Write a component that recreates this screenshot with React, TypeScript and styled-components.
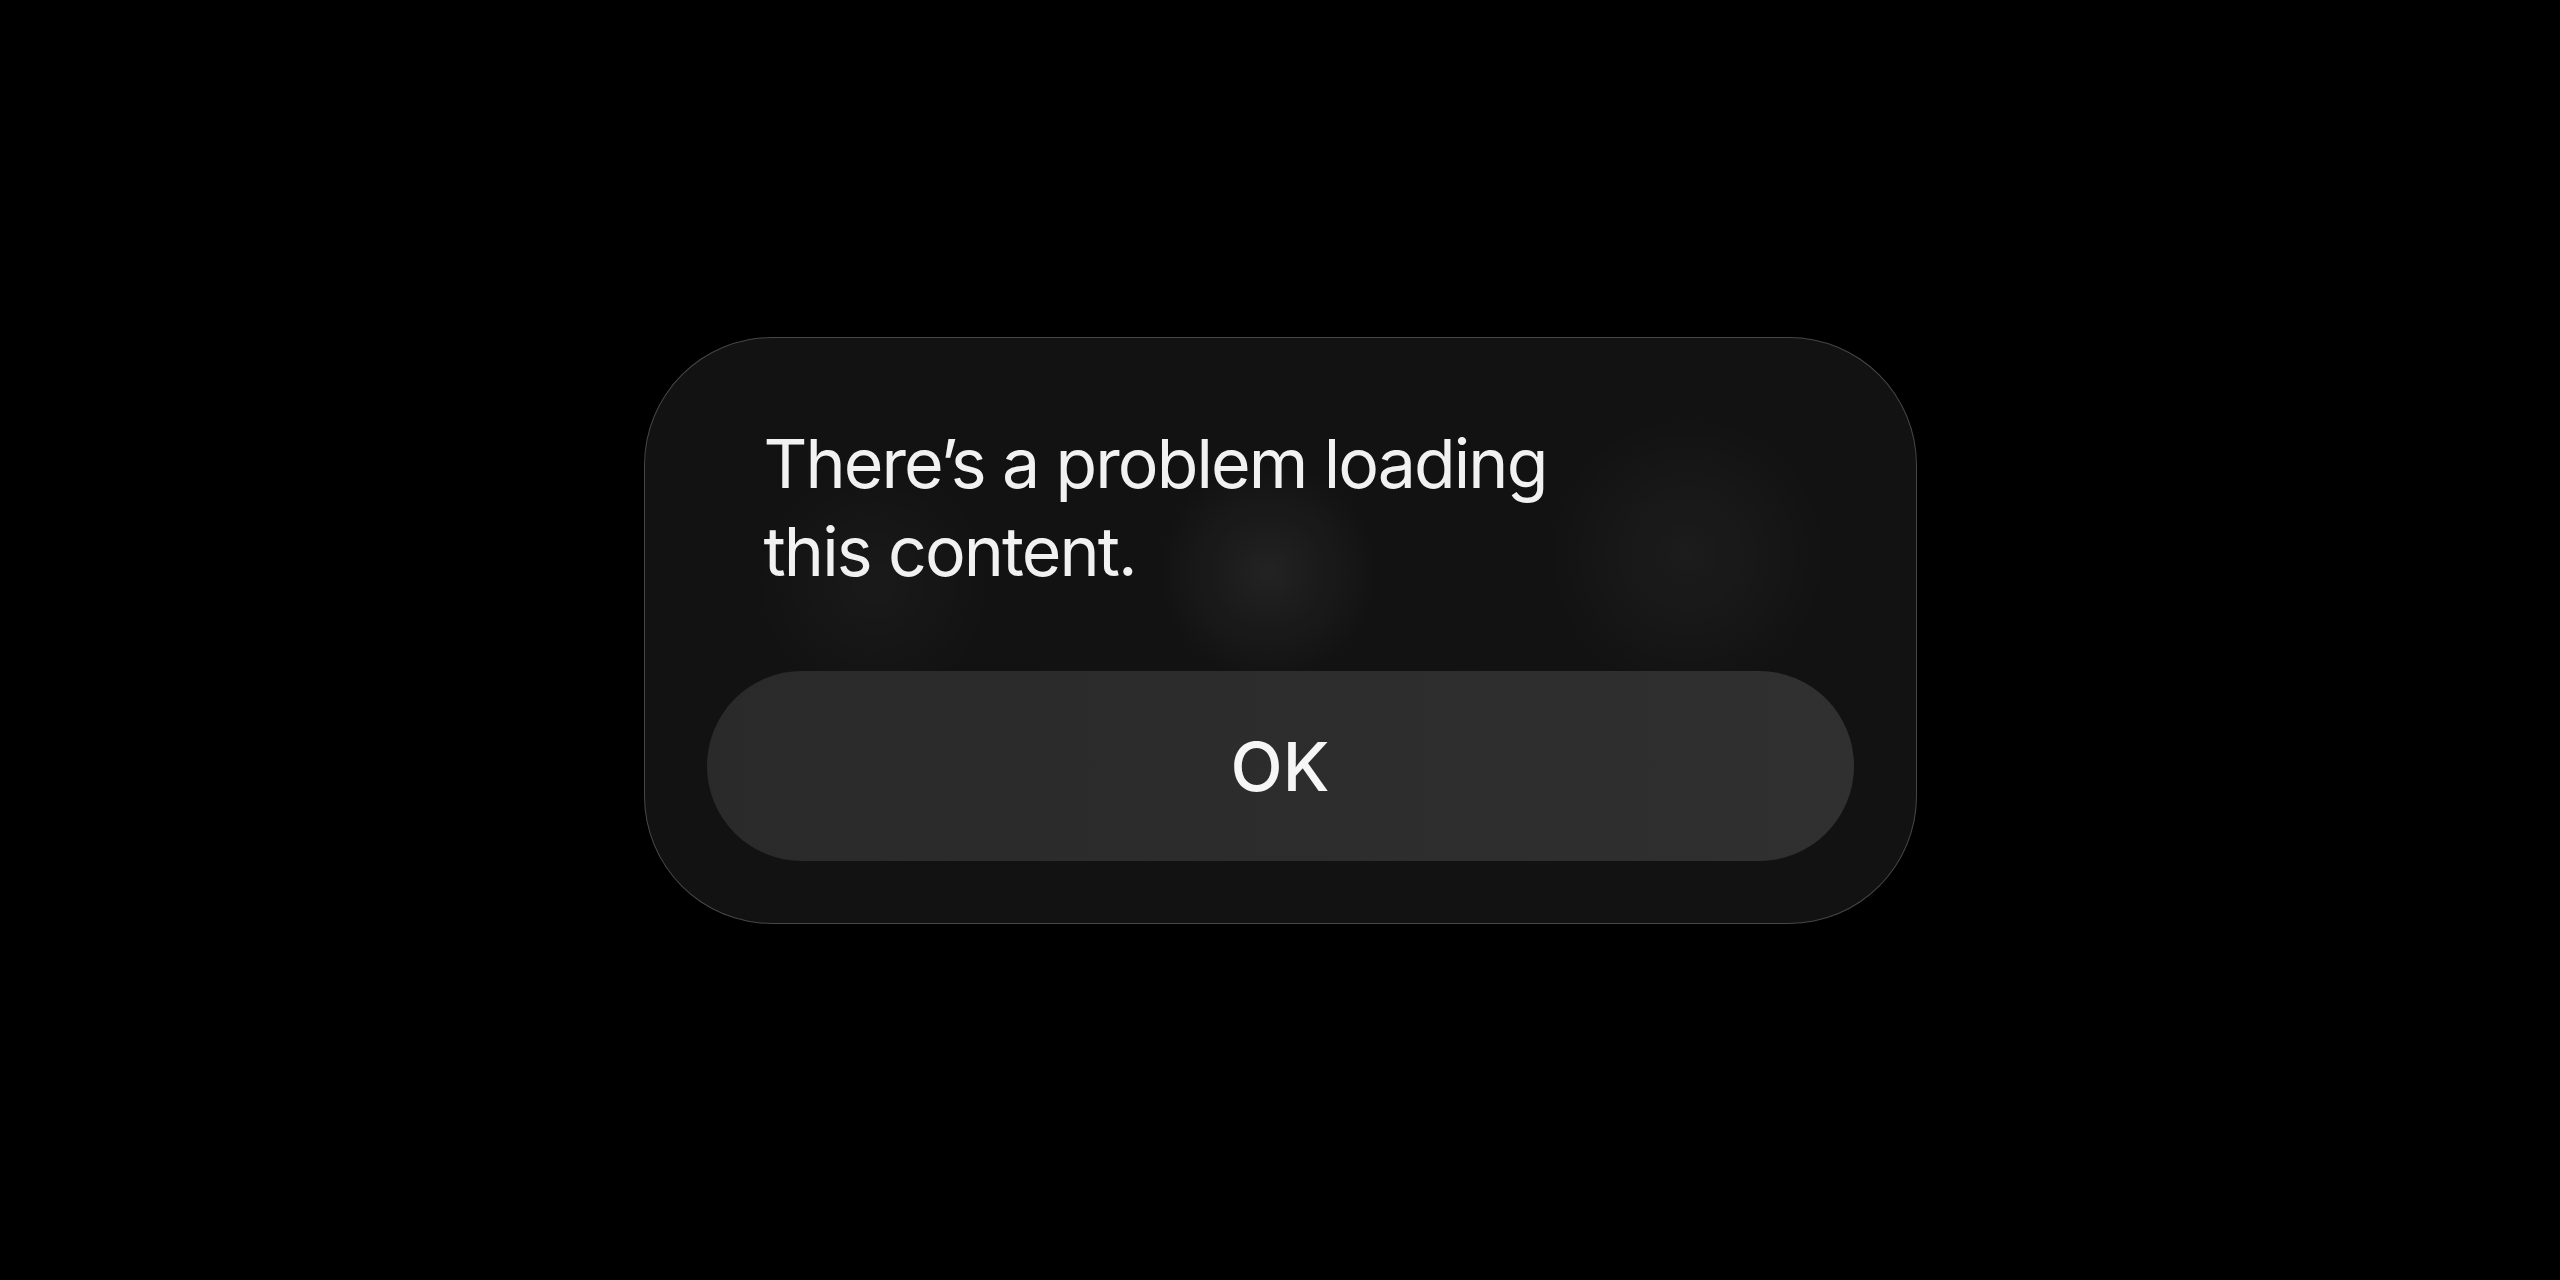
import React from 'react';
import styled, { createGlobalStyle } from 'styled-components';

const GlobalStyle = createGlobalStyle`
  html, body {
    margin: 0;
    padding: 0;
    background: #000;
  }
  body {
    font-family: Inter, "Noto Sans", "Liberation Sans", sans-serif;
    -webkit-font-smoothing: antialiased;
  }
`;

const Page = styled.div`
  width: 2560px;
  height: 1280px;
  display: flex;
  align-items: center;
  justify-content: center;
  padding-bottom: 20px;
  box-sizing: border-box;
  background: #000;
`;

const Dialog = styled.div`
  width: 1273px;
  height: 587px;
  box-sizing: border-box;
  padding: 62px;
  display: flex;
  flex-direction: column;
  border-radius: 128px;
  border: 1.5px solid rgba(255, 255, 255, 0.22);
  background:
    radial-gradient(circle at 49% 40%, rgba(255, 255, 255, 0.07) 0, rgba(255, 255, 255, 0) 110px),
    radial-gradient(circle at 82% 37%, rgba(255, 255, 255, 0.045) 0, rgba(255, 255, 255, 0) 140px),
    radial-gradient(circle at 18% 42%, rgba(255, 255, 255, 0.03) 0, rgba(255, 255, 255, 0) 120px),
    #121212;
`;

const Message = styled.p`
  margin: 19px 0 0 57px;
  flex: 1;
  color: #f1f1f1;
  font-size: 68px;
  line-height: 88px;
  font-weight: 400;
  letter-spacing: -1.9px;
`;

const Button = styled.button`
  height: 190px;
  width: 100%;
  border: none;
  border-radius: 95px;
  background: linear-gradient(90deg, #2a2a2a 0%, #2d2d2d 60%, #303030 100%);
  color: #f6f6f6;
  font-family: inherit;
  font-size: 68px;
  font-weight: 500;
  letter-spacing: 0;
  cursor: pointer;
`;

export default function App() {
  return (
    <>
      <GlobalStyle />
      <Page>
        <Dialog>
          <Message>
            There’s a problem loading
            <br />
            this content.
          </Message>
          <Button>OK</Button>
        </Dialog>
      </Page>
    </>
  );
}
